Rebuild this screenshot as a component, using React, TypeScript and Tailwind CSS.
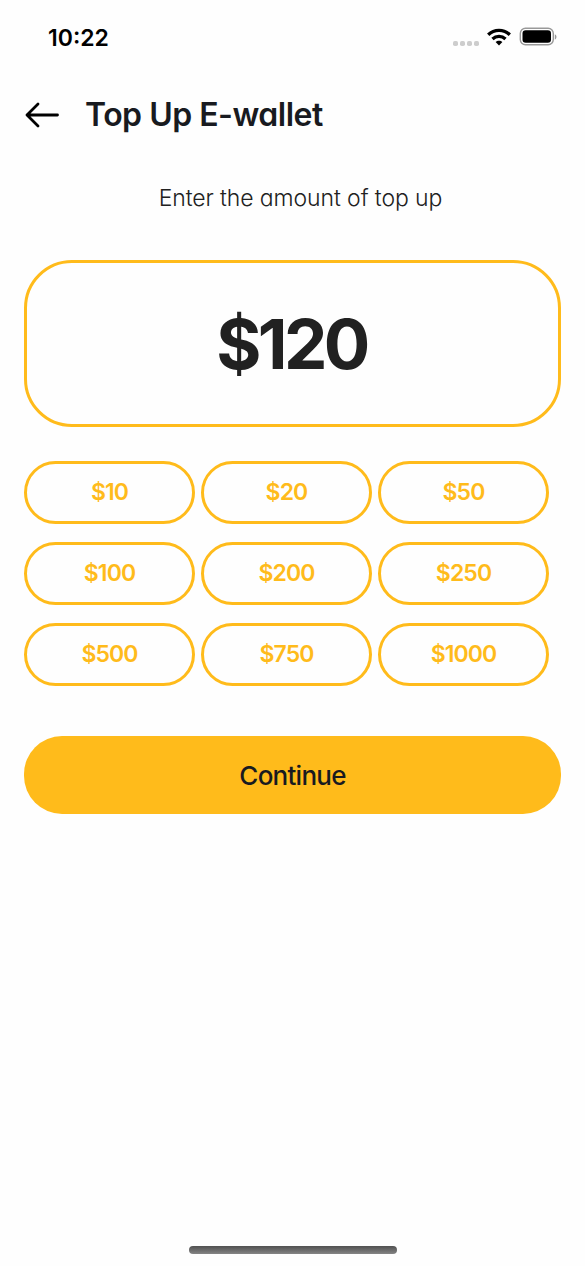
const amountRows = [
  ["$10", "$20", "$50"],
  ["$100", "$200", "$250"],
  ["$500", "$750", "$1000"],
];

function StatusBar() {
  return (
    <header className="flex h-[75px] items-center justify-between pl-12 pr-7">
      <span className="text-[23px] leading-7 font-semibold text-black">10:22</span>
      <div className="flex items-center">
        <svg width="26" height="20" viewBox="0 0 26 20" fill="#cdcdcd" className="mt-[8px]">
          <rect x="0" y="9" width="5" height="5" rx="1.8" />
          <rect x="7" y="9" width="5" height="5" rx="1.8" />
          <rect x="14" y="9" width="5" height="5" rx="1.8" />
          <rect x="21" y="9" width="5" height="5" rx="1.8" />
        </svg>
        <svg width="24" height="18" viewBox="0 0 24 18" className="mb-0.5 ml-2" fill="none" stroke="#000" strokeWidth="3.3">
          <path d="M1.2 6.7C7.3.8 16.7.8 22.8 6.7" />
          <path d="M5.5 11C9.2 7.5 14.8 7.5 18.5 11" />
          <path d="M8.6 14.1C10.5 12.3 13.5 12.3 15.4 14.1L12 17.5Z" fill="#000" stroke="none" />
        </svg>
        <svg width="38" height="20" viewBox="0 0 38 20" className="mb-px ml-2">
          <rect x="1.3" y="1.3" width="33" height="16.5" rx="5.2" fill="none" stroke="#999" strokeWidth="1.4" />
          <rect x="3.5" y="3.3" width="28.5" height="12.5" rx="3.2" />
          <path d="M35.8 7.2C38 8 38 11.8 35.8 12.6Z" fill="#999" />
        </svg>
      </div>
    </header>
  );
}

export default function App() {
  return (
    <main className="flex h-[1266px] w-[585px] flex-col overflow-hidden bg-[#fefefe] font-['Inter',sans-serif] text-[#212121]">
      <StatusBar />
      <div className="flex h-20 items-center pl-[25px]">
        <button aria-label="Back" className="flex">
          <svg width="35" height="26" viewBox="0 0 35 26" fill="none" stroke="#000" strokeWidth="2.8" strokeLinecap="round" strokeLinejoin="round">
            <path d="M32.5 13H2M13 2L2 13L13 24" />
          </svg>
        </button>
        <h1 className="ml-[25px] text-[32px] leading-10 font-semibold tracking-[-0.5px] whitespace-nowrap text-[#181a20] [font-feature-settings:'cv11']">Top Up E-wallet</h1>
      </div>
      <p className="mt-[27px] pl-4 text-center text-[23px] leading-8 font-light tracking-[-0.1px] whitespace-nowrap [font-feature-settings:'cv11']">Enter the amount of top up</p>
      <section className="mx-6 mt-[46px] flex h-[167px] items-center justify-center rounded-[48px] border-3 border-[#ffbb1b]">
        <span className="mr-0.5 pt-0.5 text-[69px] leading-none font-bold tracking-[-3.6px]">$120</span>
      </section>
      <section className="mt-[33.5px] ml-6 flex flex-col gap-[18px]">
        {amountRows.map((row) => (
          <div key={row[0]} className="flex gap-1.5">
            {row.map((amount) => (
              <button key={amount} className="flex h-[63px] w-[171px] items-center justify-center rounded-[32px] border-3 border-[#ffbb1b] pt-px text-[23px] font-semibold tracking-[-0.9px] text-[#ffbb1b]">
                {amount}
              </button>
            ))}
          </div>
        ))}
      </section>
      <button className="mx-6 mt-[50.5px] h-[78px] shrink-0 rounded-[38px] bg-[#ffbb1b] pt-px text-[26px] font-medium tracking-[-0.75px] text-[#181a20]">Continue</button>
      <div className="mt-auto mb-3 ml-[188.5px] h-2 w-[208px] rounded-full bg-linear-to-b from-[#505050] to-[#858585]" />
    </main>
  );
}
